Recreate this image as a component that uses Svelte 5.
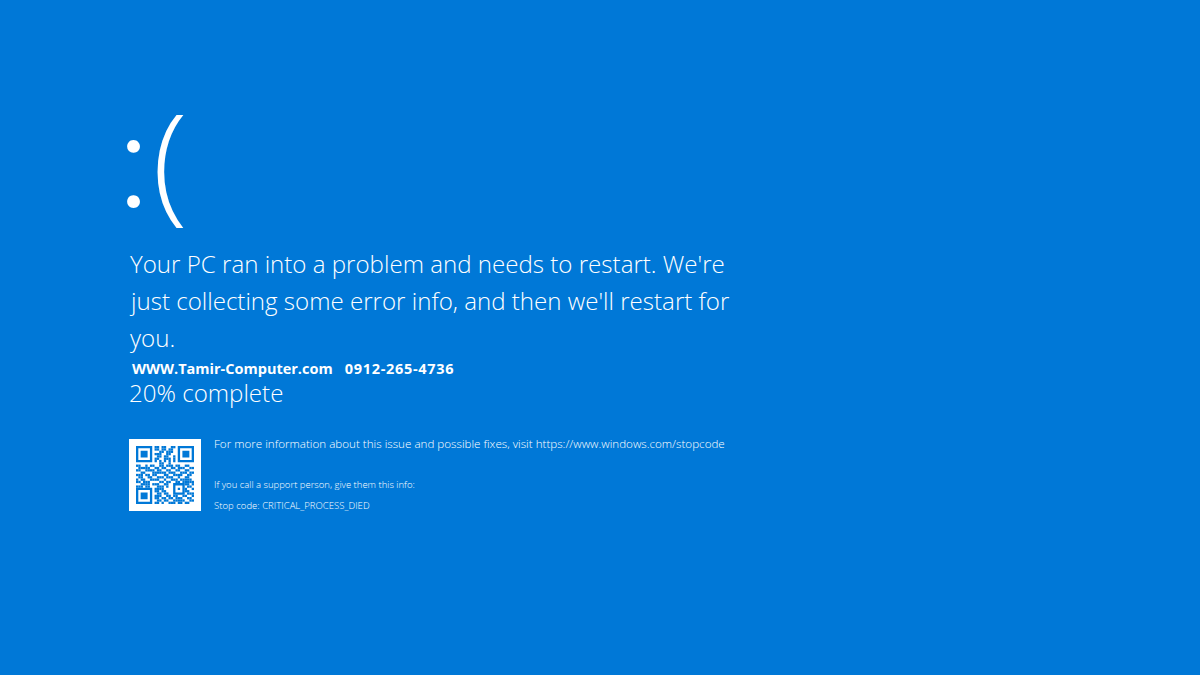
<script>
  // version 2 code (25x25), finder and alignment patterns are stamped on afterwards
  const rows = [
    "0000000011011001100000000",
    "0000000011011011000000000",
    "0000000000110111000000000",
    "0000000011100110000000000",
    "0000000001101100100000000",
    "0000000011001110100000000",
    "0000000010101010100000000",
    "0000000000110010000000000",
    "1100101100110111011001100",
    "0111110011011001101110011",
    "1100111101100110011001100",
    "0011000111111011100111011",
    "1110110110001100111100110",
    "0110011001110111001001100",
    "1011001111001001110111110",
    "1101110000110110011011111",
    "0011110111001100000001101",
    "1110110001110100000000110",
    "0000000011110000000001001",
    "0000000011011000000001100",
    "0000000001101100000000111",
    "0000000011100110110011001",
    "0000000011011011011100110",
    "0000000001101100111110011",
    "0000000011010011101101100"
  ];
  const size = 25;
  const modules = [];
  rows.forEach((row, y) => {
    [...row].forEach((c, x) => {
      if (c === "1") modules.push({ x, y });
    });
  });
  const finders = [
    { x: 0, y: 0 },
    { x: 18, y: 0 },
    { x: 0, y: 18 }
  ];
  const alignment = { x: 16, y: 16 };
</script>

<main class="screen">
  <div class="face"><span class="eyes">:</span><span class="mouth">(</span></div>
  <p class="message">Your PC ran into a problem and needs to restart. We're<br /><span class="nudge">just collecting some error info, and then we'll restart for</span><br />you.</p>
  <p class="promo">WWW.Tamir-Computer.com<span class="phone">0912-265-4736</span></p>
  <p class="progress">20% complete</p>
  <div class="details">
    <div class="qr">
      <svg viewBox="0 0 {size} {size}" width="58" height="58">
        <g fill="#0078d7">
          {#each modules as m}
            <rect x={m.x} y={m.y} width="1" height="1" />
          {/each}
          {#each finders as f}
            <path d="M{f.x} {f.y}h7v7h-7z M{f.x + 1} {f.y + 1}v5h5v-5z M{f.x + 2} {f.y + 2}h3v3h-3z" fill-rule="evenodd" />
          {/each}
          <path d="M{alignment.x} {alignment.y}h5v5h-5z M{alignment.x + 1} {alignment.y + 1}v3h3v-3z M{alignment.x + 2} {alignment.y + 2}h1v1h-1z" fill-rule="evenodd" />
        </g>
      </svg>
    </div>
    <div class="info">
      <p class="more">For more information about this issue and possible fixes, visit https://www.windows.com/stopcode</p>
      <p class="small">If you call a support person, give them this info:</p>
      <p class="small stop">Stop code: CRITICAL_PROCESS_DIED</p>
    </div>
  </div>
</main>

<style>
  :global(body) {
    margin: 0;
    background: #0078d7;
  }

  .screen {
    box-sizing: border-box;
    height: 675px;
    overflow: hidden;
    padding: 66px 0 0 129px;
    background: #0078d7;
    color: #fff;
    font-family: "Open Sans", "Noto Sans", sans-serif;
    font-weight: 300;
  }

  p {
    margin: 0;
  }

  .face {
    display: flex;
    align-items: baseline;
    height: 179px;
    line-height: 178px;
    margin-left: -12px;
    white-space: nowrap;
  }

  .eyes {
    font-family: Lato, sans-serif;
    font-size: 138px;
    font-weight: 300;
    transform: translateY(-1px);
  }

  .mouth {
    margin-left: 2px;
    font-size: 130px;
    font-weight: 350;
  }

  .message {
    margin-left: 1px;
    width: 640px;
    font-size: 24.1px;
    line-height: 37px;
    white-space: nowrap;
  }

  .nudge {
    margin-left: 1px;
  }

  .promo {
    margin: 4px 0 0 3px;
    font-size: 14.5px;
    line-height: 18px;
    font-weight: 700;
    white-space: nowrap;
  }

  .phone {
    margin-left: 12px;
    letter-spacing: 0.7px;
  }

  .progress {
    font-size: 24.1px;
    line-height: 30px;
  }

  .details {
    display: flex;
    gap: 13px;
    margin-top: 31px;
  }

  .qr {
    display: flex;
    align-items: center;
    justify-content: center;
    flex: none;
    width: 72px;
    height: 72px;
    background: #fff;
  }

  .more {
    font-size: 11.63px;
    line-height: 16px;
    margin-top: -3px;
    white-space: nowrap;
  }

  .small {
    font-size: 9.5px;
    line-height: 14px;
    margin-top: 26px;
    white-space: nowrap;
  }

  .stop {
    margin-top: 7px;
    letter-spacing: 0.04px;
  }
</style>
